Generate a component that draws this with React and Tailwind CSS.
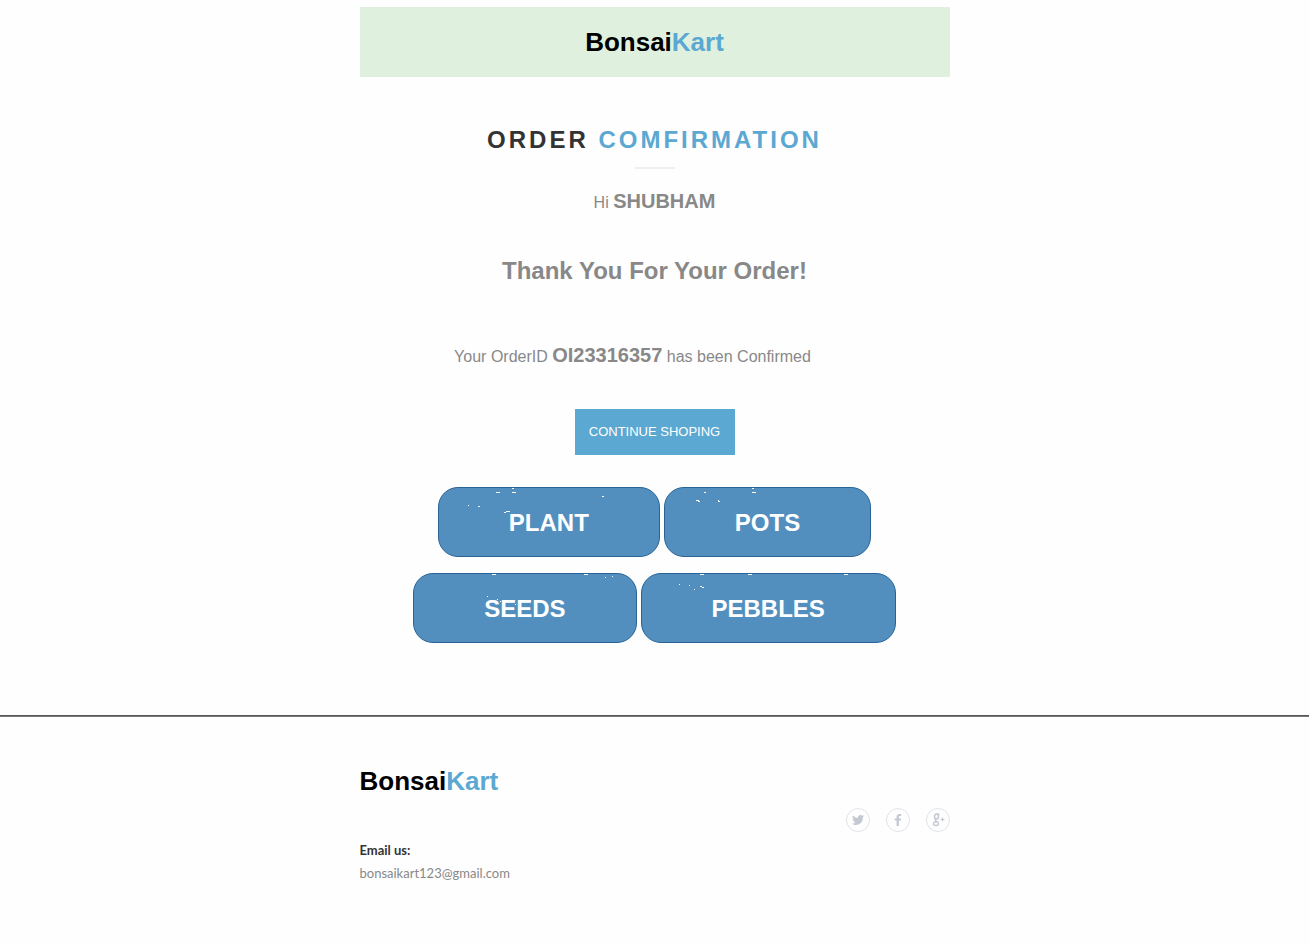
import React from "react";

const categories = [
  [
    {
      name: "PLANT",
      specks: [[58, 5, 4], [74, 1, 2], [74, 5, 4], [164, 9, 2], [30, 18, 1], [40, 19, 2], [66, 25, 2], [68, 24, 4]],
    },
    {
      name: "POTS",
      specks: [[88, 1, 2], [88, 5, 4], [40, 5, 2], [32, 13, 3], [34, 14, 2], [54, 13, 1], [54, 14, 2]],
    },
  ],
  [
    {
      name: "SEEDS",
      specks: [[79, 1, 4], [171, 1, 4], [192, 4, 1], [199, 3, 1], [74, 23, 1], [84, 26, 1], [87, 28, 1], [102, 31, 1]],
    },
    {
      name: "PEBBLES",
      specks: [[59, 1, 4], [107, 1, 4], [203, 1, 4], [38, 11, 1], [48, 12, 1], [53, 16, 1], [59, 13, 2], [61, 14, 2]],
    },
  ],
];

const socials = [
  {
    name: "Twitter",
    icon: (
      <path d="M18 8.1a5 5 0 0 1-1.400.4 2.500 2.500 0 0 0 1.100-1.400 5 5 0 0 1-1.600.6 2.500 2.500 0 0 0-4.200 2.300A7 7 0 0 1 6.800 7.400a2.500 2.500 0 0 0 .8 3.300 2.500 2.500 0 0 1-1.100-.3 2.500 2.500 0 0 0 2 2.500 2.500 2.500 0 0 1-1.100 0 2.500 2.500 0 0 0 2.300 1.700A5 5 0 0 1 6 15.700a7 7 0 0 0 10.800-6.300A5 5 0 0 0 18 8.100z" />
    ),
  },
  {
    name: "Facebook",
    icon: <path d="M12.900 18v-5.400h1.900l.3-2.200h-2.200V9c0-.6.2-1 1.100-1h1.200V6.100A15 15 0 0 0 13.500 6c-1.700 0-2.900 1-2.900 2.900v1.500H8.700v2.200h1.900V18z" />,
  },
  {
    name: "Google Plus",
    icon: (
      <g fill="none" stroke="currentColor">
        <ellipse cx="10.500" cy="8.600" rx="2" ry="2.500" strokeWidth="1.500" />
        <path strokeWidth="1.300" d="M10 11.300c-1.200.8-.9 1.300.3 1.900 1.500.7 2.200 1.200 2.200 2.200 0 1.300-1.200 2.100-2.600 2.100-1.500 0-2.500-.7-2.500-1.700 0-1.300 1.400-1.900 3.300-2" />
        <path d="M10.500 6.100h3.200" />
        <path strokeWidth="1.200" d="M16.500 9.500v4M14.500 11.500h4" />
      </g>
    ),
  },
];

function Logo() {
  return (
    <a href="#home" className="text-[26px] leading-8 font-bold text-black">
      Bonsai<span className="text-[#5ba8d2]">Kart</span>
    </a>
  );
}

function CategoryButton({ name, specks }) {
  return (
    <button
      type="button"
      className="relative h-[70px] rounded-[20px] border border-[#2a6496] bg-[#528fbf] px-[70px] pt-0.5 text-2xl font-bold text-white"
    >
      <svg className="absolute -top-px -left-px h-[70px] w-[260px]" fill="#fff" aria-hidden="true">
        {specks.map(([x, y, w]) => (
          <rect key={`${x}-${y}`} x={x} y={y} width={w} height="1" />
        ))}
      </svg>
      {name}
    </button>
  );
}

export default function App() {
  return (
    <div className="min-h-screen bg-[#fefefe] pt-[7px] pb-14 font-['Liberation_Sans',Arial,sans-serif] text-[#888888]">
      <main className="mx-auto flex max-w-[590px] flex-col items-center text-center">
        <header className="flex h-[70px] w-full items-center justify-center bg-[#dff1de]">
          <Logo />
        </header>

        <h1 className="mt-[47px] text-2xl leading-8 font-bold tracking-[3px] text-[#333333]">
          ORDER <span className="text-[#5ba8d2]">COMFIRMATION</span>
        </h1>
        <div className="mt-[11px] h-0.5 w-10 bg-[#eeeeee]" />

        <p className="mt-5 text-base leading-6">
          Hi <strong className="text-xl leading-6">SHUBHAM</strong>
        </p>
        <h2 className="mt-10 text-2xl leading-8 font-bold">Thank You For Your Order!</h2>
        <p className="mt-14 pr-11 text-base leading-6">
          Your OrderID <strong className="text-xl leading-6">OI23316357</strong> has been Confirmed
        </p>

        <button type="button" className="mt-10 h-[46px] w-40 bg-[#5ba8d2] text-[13px] text-white">
          CONTINUE SHOPING
        </button>

        <div className="mt-8 flex flex-col gap-4">
          {categories.map((row) => (
            <div key={row[0].name} className="flex flex-wrap justify-center gap-1">
              {row.map((item) => (
                <CategoryButton key={item.name} {...item} />
              ))}
            </div>
          ))}
        </div>
      </main>

      <hr className="mt-[72px] h-0.5 border-t border-b border-t-[#555555] border-b-[#777777]" />

      <footer className="mx-auto mt-12 max-w-[590px]">
        <div className="flex">
          <Logo />
        </div>
        <div className="mt-[11px] flex justify-end gap-4">
          {socials.map(({ name, icon }) => (
            <a key={name} href={`#${name.toLowerCase().replace(" ", "-")}`} aria-label={name} className="text-[#c4c8d2]">
              <svg viewBox="0 0 24 24" className="size-6" fill="currentColor" aria-hidden="true">
                <circle cx="12" cy="12" r="11.500" fill="none" stroke="#e0e3ea" />
                {icon}
              </svg>
            </a>
          ))}
        </div>
        <div className="mt-[7px] font-['Lato',sans-serif] text-[13px] leading-[23px]">
          <p className="font-bold text-[#333333]">Email us:</p>
          <a href="mailto:bonsaikart123@gmail.com">bonsaikart123@gmail.com</a>
        </div>
      </footer>
    </div>
  );
}
